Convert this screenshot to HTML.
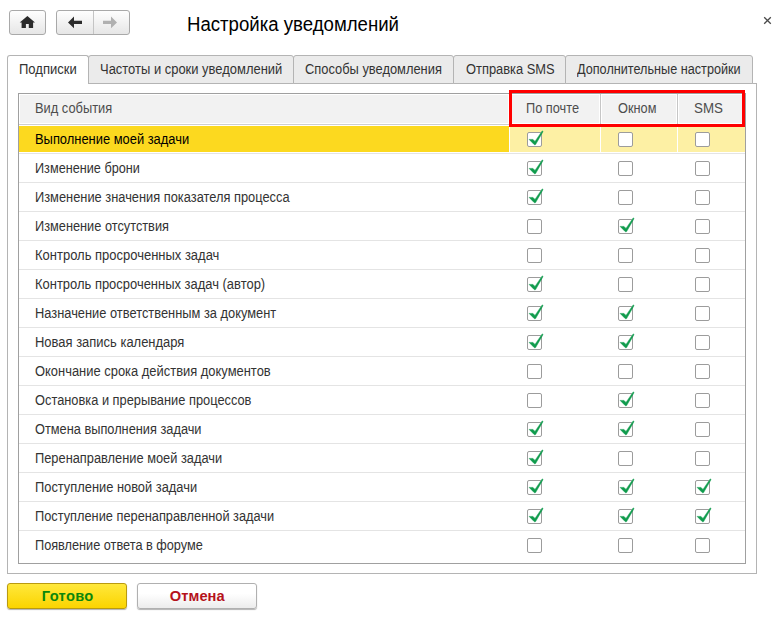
<!DOCTYPE html>
<html lang="ru">
<head>
<meta charset="utf-8">
<title>Настройка уведомлений</title>
<style>
html,body{margin:0;padding:0;}
body{width:776px;height:619px;background:#fff;position:relative;overflow:hidden;font-family:"Liberation Sans",Arial,sans-serif;font-size:13.5px;color:#333;}
.abs,.tx,.tab,.panel,.grid,.hc,.hs,.hl,.rl,.sel,.cb,.red,.btn,.tbtn{position:absolute;box-sizing:border-box;}
.tx{white-space:nowrap;line-height:1.15;transform-origin:0 0;}
.tbtn{top:10px;height:25px;border:1px solid #a9a9a9;border-radius:3px;background:linear-gradient(#fefefe,#e6e6e6);}
.title{font-size:20px;color:#000;}
.tab{top:55px;height:29px;border:1px solid #b4b4b4;background:#ebebeb;border-radius:3px 3px 0 0;}
.tab.active{background:#fff;border-bottom:none;z-index:2;}
.tt{font-size:14px;color:#333;z-index:3;}
.panel{left:7px;top:83px;width:750px;height:491px;border:1px solid #b4b4b4;background:#fff;}
.grid{left:18px;top:93px;width:728px;height:471px;border:1px solid #a0a0a0;background:#fff;}
.hc{top:95px;height:28px;background:#f2f2f2;}
.hs{top:94px;width:1px;height:30px;background:#c6c6c6;}
.hl{left:19px;top:124px;width:726px;height:1px;background:#cfcfcf;}
.ht{font-size:14px;color:#4d4d4d;}
.rl{left:19px;width:726px;height:1px;background:#e4e4e4;}
.sel{top:126px;height:26px;}
.rt{font-size:14px;color:#333;}
.rt.s{color:#000;}
.cb{width:15px;height:15px;border:1px solid #9c9c9c;border-radius:2px;background:#fff;}
.cb svg{position:absolute;left:-1px;top:-1px;width:15px;height:15px;overflow:visible;}
.red{left:509px;top:90px;width:236px;height:37px;border:3px solid #ff0000;z-index:5;}
.btn{top:583px;height:26px;width:120px;border:1px solid #b0b0b0;border-radius:3px;box-shadow:0 1px 1px rgba(0,0,0,.3);}
.ok{left:7px;background:linear-gradient(#ffe83c,#fbd400);border-color:#b99a10;}
.cancel{left:137px;background:linear-gradient(#ffffff 40%,#ececec);}
.bt{font-weight:bold;font-size:14.67px;z-index:3;}
</style>
</head>
<body>
<div class="tbtn" style="left:9px;width:37px;">
<svg class="abs" style="left:9px;top:5px" width="16" height="13" viewBox="0 0 16 13"><path d="M8.4 0 L0.7 6.6 H2.6 V12 H6.9 V8 H9.8 V12 H14.1 V6.6 H16 Z" fill="#2b2b2b"/></svg>
</div>
<div class="tbtn" style="left:56px;width:74px;">
<div class="abs" style="left:36px;top:0;width:1px;height:23px;background:#c4c4c4"></div>
<svg class="abs" style="left:10px;top:5px" width="16" height="13" viewBox="0 0 16 13"><path d="M7 0.6 L1 6.4 L7 12.2 V8 H15 V4.8 H7 Z" fill="#2b2b2b"/></svg>
<svg class="abs" style="left:45px;top:5px" width="16" height="13" viewBox="0 0 16 13"><path d="M9 0.6 L15 6.4 L9 12.2 V8 H1 V4.8 H9 Z" fill="#b0b0b0"/></svg>
</div>

<div class="tx title" style="left:186.75px;top:12.50px;transform:scaleX(0.9304)">Настройка уведомлений</div>
<svg class="abs" style="left:763px;top:16px" width="9" height="9" viewBox="0 0 9 9"><path d="M1.2 1.2 L7.8 7.8 M7.8 1.2 L1.2 7.8" stroke="#4a4a4a" stroke-width="1.3" fill="none"/></svg>
<div class="panel"></div>
<div class="tab active" style="left:7px;width:82px"></div>
<div class="tx tt" style="left:19.15px;top:61.00px;transform:scaleX(0.9306)">Подписки</div>
<div class="tab" style="left:88px;width:206px"></div>
<div class="tx tt" style="left:99.75px;top:61.00px;transform:scaleX(0.9256)">Частоты и сроки уведомлений</div>
<div class="tab" style="left:293px;width:161px"></div>
<div class="tx tt" style="left:304.75px;top:61.00px;transform:scaleX(0.9199)">Способы уведомления</div>
<div class="tab" style="left:453px;width:113px"></div>
<div class="tx tt" style="left:465.50px;top:61.00px;transform:scaleX(0.9200)">Отправка SMS</div>
<div class="tab" style="left:565px;width:188px"></div>
<div class="tx tt" style="left:577.25px;top:61.00px;transform:scaleX(0.9043)">Дополнительные настройки</div>
<div class="grid"></div>
<div class="hc" style="left:20px;width:488px"></div>
<div class="hc" style="left:511px;width:88px"></div>
<div class="hc" style="left:602px;width:74px"></div>
<div class="hc" style="left:679px;width:65px"></div>
<div class="hs" style="left:509px"></div>
<div class="hs" style="left:600px"></div>
<div class="hs" style="left:677px"></div>
<div class="hl"></div>
<div class="tx ht" style="left:34.75px;top:100.00px;transform:scaleX(0.9189)">Вид события</div>
<div class="tx ht" style="left:525.75px;top:100.00px;transform:scaleX(0.9115)">По почте</div>
<div class="tx ht" style="left:617.75px;top:100.00px;transform:scaleX(0.9111)">Окном</div>
<div class="tx ht" style="left:694.25px;top:100.00px;transform:scaleX(0.9518)">SMS</div>
<div class="sel" style="left:19px;width:490px;background:#fcd91f"></div>
<div class="sel" style="left:510px;width:90px;background:#fdf0a4"></div>
<div class="sel" style="left:601px;width:76px;background:#fdf0a4"></div>
<div class="sel" style="left:678px;width:67px;background:#fdf0a4"></div>
<div class="rl" style="top:153px"></div>
<div class="rl" style="top:182px"></div>
<div class="rl" style="top:211px"></div>
<div class="rl" style="top:240px"></div>
<div class="rl" style="top:269px"></div>
<div class="rl" style="top:298px"></div>
<div class="rl" style="top:327px"></div>
<div class="rl" style="top:356px"></div>
<div class="rl" style="top:385px"></div>
<div class="rl" style="top:414px"></div>
<div class="rl" style="top:443px"></div>
<div class="rl" style="top:472px"></div>
<div class="rl" style="top:501px"></div>
<div class="rl" style="top:530px"></div>
<div class="tx rt s" style="left:34.50px;top:131.00px;transform:scaleX(0.9216)">Выполнение моей задачи</div>
<div class="cb" style="left:527px;top:132px"><svg viewBox="0 0 15 15"><path d="M2.1 7.4 L6 7.4 L8 9.4 L15.2 -1.1 L16.1 -0.5 L8.6 12.6 Q7.8 13.1 7.1 12.5 Z" fill="#0f9b4c" stroke="#0f9b4c" stroke-width="0.5" stroke-linejoin="round"/></svg></div>
<div class="cb" style="left:618px;top:132px"></div>
<div class="cb" style="left:695px;top:132px"></div>
<div class="tx rt" style="left:34.50px;top:160.00px;transform:scaleX(0.9059)">Изменение брони</div>
<div class="cb" style="left:527px;top:161px"><svg viewBox="0 0 15 15"><path d="M2.1 7.4 L6 7.4 L8 9.4 L15.2 -1.1 L16.1 -0.5 L8.6 12.6 Q7.8 13.1 7.1 12.5 Z" fill="#0f9b4c" stroke="#0f9b4c" stroke-width="0.5" stroke-linejoin="round"/></svg></div>
<div class="cb" style="left:618px;top:161px"></div>
<div class="cb" style="left:695px;top:161px"></div>
<div class="tx rt" style="left:34.50px;top:189.00px;transform:scaleX(0.9174)">Изменение значения показателя процесса</div>
<div class="cb" style="left:527px;top:190px"><svg viewBox="0 0 15 15"><path d="M2.1 7.4 L6 7.4 L8 9.4 L15.2 -1.1 L16.1 -0.5 L8.6 12.6 Q7.8 13.1 7.1 12.5 Z" fill="#0f9b4c" stroke="#0f9b4c" stroke-width="0.5" stroke-linejoin="round"/></svg></div>
<div class="cb" style="left:618px;top:190px"></div>
<div class="cb" style="left:695px;top:190px"></div>
<div class="tx rt" style="left:34.50px;top:218.00px;transform:scaleX(0.9119)">Изменение отсутствия</div>
<div class="cb" style="left:527px;top:219px"></div>
<div class="cb" style="left:618px;top:219px"><svg viewBox="0 0 15 15"><path d="M2.1 7.4 L6 7.4 L8 9.4 L15.2 -1.1 L16.1 -0.5 L8.6 12.6 Q7.8 13.1 7.1 12.5 Z" fill="#0f9b4c" stroke="#0f9b4c" stroke-width="0.5" stroke-linejoin="round"/></svg></div>
<div class="cb" style="left:695px;top:219px"></div>
<div class="tx rt" style="left:34.50px;top:247.00px;transform:scaleX(0.9276)">Контроль просроченных задач</div>
<div class="cb" style="left:527px;top:248px"></div>
<div class="cb" style="left:618px;top:248px"></div>
<div class="cb" style="left:695px;top:248px"></div>
<div class="tx rt" style="left:34.50px;top:276.00px;transform:scaleX(0.9254)">Контроль просроченных задач (автор)</div>
<div class="cb" style="left:527px;top:277px"><svg viewBox="0 0 15 15"><path d="M2.1 7.4 L6 7.4 L8 9.4 L15.2 -1.1 L16.1 -0.5 L8.6 12.6 Q7.8 13.1 7.1 12.5 Z" fill="#0f9b4c" stroke="#0f9b4c" stroke-width="0.5" stroke-linejoin="round"/></svg></div>
<div class="cb" style="left:618px;top:277px"></div>
<div class="cb" style="left:695px;top:277px"></div>
<div class="tx rt" style="left:34.50px;top:305.00px;transform:scaleX(0.9181)">Назначение ответственным за документ</div>
<div class="cb" style="left:527px;top:306px"><svg viewBox="0 0 15 15"><path d="M2.1 7.4 L6 7.4 L8 9.4 L15.2 -1.1 L16.1 -0.5 L8.6 12.6 Q7.8 13.1 7.1 12.5 Z" fill="#0f9b4c" stroke="#0f9b4c" stroke-width="0.5" stroke-linejoin="round"/></svg></div>
<div class="cb" style="left:618px;top:306px"><svg viewBox="0 0 15 15"><path d="M2.1 7.4 L6 7.4 L8 9.4 L15.2 -1.1 L16.1 -0.5 L8.6 12.6 Q7.8 13.1 7.1 12.5 Z" fill="#0f9b4c" stroke="#0f9b4c" stroke-width="0.5" stroke-linejoin="round"/></svg></div>
<div class="cb" style="left:695px;top:306px"></div>
<div class="tx rt" style="left:34.50px;top:334.00px;transform:scaleX(0.9262)">Новая запись календаря</div>
<div class="cb" style="left:527px;top:335px"><svg viewBox="0 0 15 15"><path d="M2.1 7.4 L6 7.4 L8 9.4 L15.2 -1.1 L16.1 -0.5 L8.6 12.6 Q7.8 13.1 7.1 12.5 Z" fill="#0f9b4c" stroke="#0f9b4c" stroke-width="0.5" stroke-linejoin="round"/></svg></div>
<div class="cb" style="left:618px;top:335px"><svg viewBox="0 0 15 15"><path d="M2.1 7.4 L6 7.4 L8 9.4 L15.2 -1.1 L16.1 -0.5 L8.6 12.6 Q7.8 13.1 7.1 12.5 Z" fill="#0f9b4c" stroke="#0f9b4c" stroke-width="0.5" stroke-linejoin="round"/></svg></div>
<div class="cb" style="left:695px;top:335px"></div>
<div class="tx rt" style="left:34.75px;top:363.00px;transform:scaleX(0.9232)">Окончание срока действия документов</div>
<div class="cb" style="left:527px;top:364px"></div>
<div class="cb" style="left:618px;top:364px"></div>
<div class="cb" style="left:695px;top:364px"></div>
<div class="tx rt" style="left:34.75px;top:392.00px;transform:scaleX(0.9164)">Остановка и прерывание процессов</div>
<div class="cb" style="left:527px;top:393px"></div>
<div class="cb" style="left:618px;top:393px"><svg viewBox="0 0 15 15"><path d="M2.1 7.4 L6 7.4 L8 9.4 L15.2 -1.1 L16.1 -0.5 L8.6 12.6 Q7.8 13.1 7.1 12.5 Z" fill="#0f9b4c" stroke="#0f9b4c" stroke-width="0.5" stroke-linejoin="round"/></svg></div>
<div class="cb" style="left:695px;top:393px"></div>
<div class="tx rt" style="left:34.75px;top:421.00px;transform:scaleX(0.9131)">Отмена выполнения задачи</div>
<div class="cb" style="left:527px;top:422px"><svg viewBox="0 0 15 15"><path d="M2.1 7.4 L6 7.4 L8 9.4 L15.2 -1.1 L16.1 -0.5 L8.6 12.6 Q7.8 13.1 7.1 12.5 Z" fill="#0f9b4c" stroke="#0f9b4c" stroke-width="0.5" stroke-linejoin="round"/></svg></div>
<div class="cb" style="left:618px;top:422px"><svg viewBox="0 0 15 15"><path d="M2.1 7.4 L6 7.4 L8 9.4 L15.2 -1.1 L16.1 -0.5 L8.6 12.6 Q7.8 13.1 7.1 12.5 Z" fill="#0f9b4c" stroke="#0f9b4c" stroke-width="0.5" stroke-linejoin="round"/></svg></div>
<div class="cb" style="left:695px;top:422px"></div>
<div class="tx rt" style="left:34.50px;top:450.00px;transform:scaleX(0.9164)">Перенаправление моей задачи</div>
<div class="cb" style="left:527px;top:451px"><svg viewBox="0 0 15 15"><path d="M2.1 7.4 L6 7.4 L8 9.4 L15.2 -1.1 L16.1 -0.5 L8.6 12.6 Q7.8 13.1 7.1 12.5 Z" fill="#0f9b4c" stroke="#0f9b4c" stroke-width="0.5" stroke-linejoin="round"/></svg></div>
<div class="cb" style="left:618px;top:451px"></div>
<div class="cb" style="left:695px;top:451px"></div>
<div class="tx rt" style="left:34.50px;top:479.00px;transform:scaleX(0.9185)">Поступление новой задачи</div>
<div class="cb" style="left:527px;top:480px"><svg viewBox="0 0 15 15"><path d="M2.1 7.4 L6 7.4 L8 9.4 L15.2 -1.1 L16.1 -0.5 L8.6 12.6 Q7.8 13.1 7.1 12.5 Z" fill="#0f9b4c" stroke="#0f9b4c" stroke-width="0.5" stroke-linejoin="round"/></svg></div>
<div class="cb" style="left:618px;top:480px"><svg viewBox="0 0 15 15"><path d="M2.1 7.4 L6 7.4 L8 9.4 L15.2 -1.1 L16.1 -0.5 L8.6 12.6 Q7.8 13.1 7.1 12.5 Z" fill="#0f9b4c" stroke="#0f9b4c" stroke-width="0.5" stroke-linejoin="round"/></svg></div>
<div class="cb" style="left:695px;top:480px"><svg viewBox="0 0 15 15"><path d="M2.1 7.4 L6 7.4 L8 9.4 L15.2 -1.1 L16.1 -0.5 L8.6 12.6 Q7.8 13.1 7.1 12.5 Z" fill="#0f9b4c" stroke="#0f9b4c" stroke-width="0.5" stroke-linejoin="round"/></svg></div>
<div class="tx rt" style="left:34.50px;top:508.00px;transform:scaleX(0.9136)">Поступление перенаправленной задачи</div>
<div class="cb" style="left:527px;top:509px"><svg viewBox="0 0 15 15"><path d="M2.1 7.4 L6 7.4 L8 9.4 L15.2 -1.1 L16.1 -0.5 L8.6 12.6 Q7.8 13.1 7.1 12.5 Z" fill="#0f9b4c" stroke="#0f9b4c" stroke-width="0.5" stroke-linejoin="round"/></svg></div>
<div class="cb" style="left:618px;top:509px"><svg viewBox="0 0 15 15"><path d="M2.1 7.4 L6 7.4 L8 9.4 L15.2 -1.1 L16.1 -0.5 L8.6 12.6 Q7.8 13.1 7.1 12.5 Z" fill="#0f9b4c" stroke="#0f9b4c" stroke-width="0.5" stroke-linejoin="round"/></svg></div>
<div class="cb" style="left:695px;top:509px"><svg viewBox="0 0 15 15"><path d="M2.1 7.4 L6 7.4 L8 9.4 L15.2 -1.1 L16.1 -0.5 L8.6 12.6 Q7.8 13.1 7.1 12.5 Z" fill="#0f9b4c" stroke="#0f9b4c" stroke-width="0.5" stroke-linejoin="round"/></svg></div>
<div class="tx rt" style="left:34.50px;top:537.00px;transform:scaleX(0.9087)">Появление ответа в форуме</div>
<div class="cb" style="left:527px;top:538px"></div>
<div class="cb" style="left:618px;top:538px"></div>
<div class="cb" style="left:695px;top:538px"></div>
<div class="red"></div>
<div class="btn ok"></div>
<div class="btn cancel"></div>
<div class="tx bt"  style="color:#0b870b;left:41.75px;top:588.00px;letter-spacing:0.330px">Готово</div>
<div class="tx bt" style="color:#b5121b;left:169.75px;top:588.00px;letter-spacing:0.070px">Отмена</div>
</body>
</html>
